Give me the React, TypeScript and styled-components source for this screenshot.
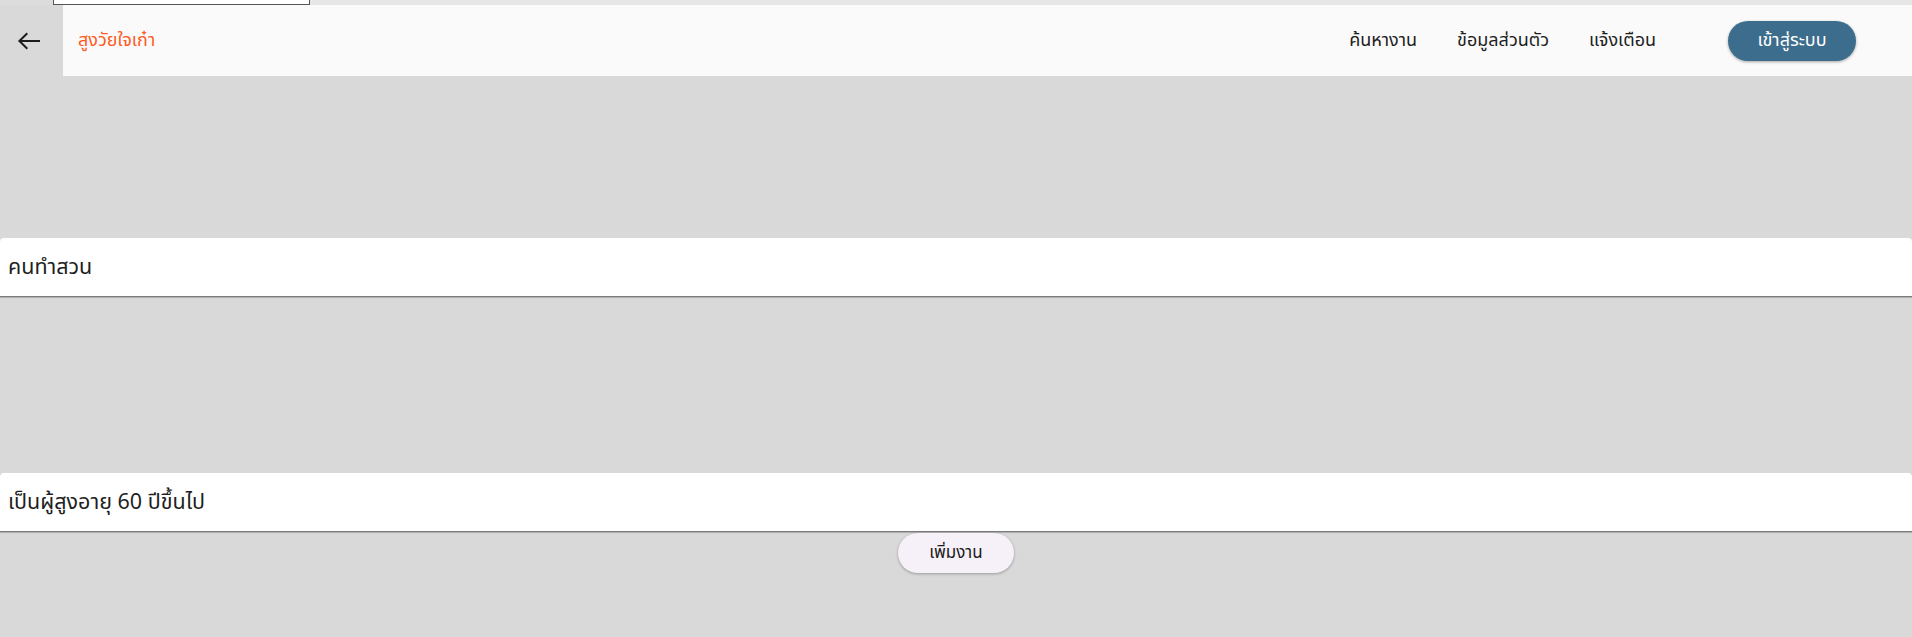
import React from "react";
import styled, { createGlobalStyle } from "styled-components";

const Global = createGlobalStyle`
  html, body { margin: 0; padding: 0; background: #d9d9d9; }
  body { font-family: "Noto Sans", "Noto Sans Thai", "Noto Sans Thai UI", sans-serif; }
  * { box-sizing: border-box; }
`;

const Page = styled.div`
  display: flex;
  flex-direction: column;
  min-height: 637px;
  background: #d9d9d9;
`;

const TopStrip = styled.div`
  height: 5px;
  background: #e6e6e6;
  display: flex;
`;

const StripSpacer = styled.div`
  width: 53px;
  background: #dcdcdc;
`;

const StripBox = styled.div`
  width: 257px;
  height: 5px;
  background: #ffffff;
  border-left: 1px solid #555;
  border-right: 1px solid #555;
  border-bottom: 1px solid #555;
`;

const Header = styled.header`
  height: 71px;
  display: flex;
  align-items: stretch;
`;

const BackArea = styled.div`
  width: 63px;
  background: #d9d9d9;
  display: flex;
  align-items: center;
  justify-content: center;
`;

const BackButton = styled.button`
  border: none;
  background: transparent;
  padding: 0;
  margin-left: -6px;
  width: 30px;
  height: 30px;
  display: flex;
  align-items: center;
  justify-content: center;
  cursor: pointer;
`;

const Bar = styled.div`
  flex: 1;
  background: #fafafa;
  display: flex;
  align-items: center;
  padding-left: 15px;
  padding-right: 56px;
`;

const Title = styled.div`
  color: #ff5a1f;
  font-size: 18px;
  flex: 1;
`;

const Nav = styled.nav`
  display: flex;
  align-items: center;
`;

const NavLink = styled.a`
  color: #1e1e1e;
  font-size: 18px;
  margin-left: 40px;
  text-decoration: none;
  cursor: pointer;
`;

const LoginButton = styled.button`
  margin-left: 72px;
  height: 40px;
  width: 128px;
  border: none;
  border-radius: 20px;
  background: #3d6d8d;
  color: #ffffff;
  font-family: inherit;
  font-size: 18px;
  box-shadow: 0 1px 3px rgba(0, 0, 0, 0.35);
  cursor: pointer;
`;

const Field = styled.div<{ $top: number }>`
  margin-top: ${(p) => p.$top}px;
  height: 59px;
  background: #ffffff;
  border-radius: 4px 4px 0 0;
  border-bottom: 1px solid #7a7a7a;
  box-shadow: 0 1px 1px rgba(0, 0, 0, 0.2);
  display: flex;
  align-items: center;
  padding-left: 8px;
  font-size: 21.5px;
  color: #1f1f1f;
`;

const Center = styled.div`
  display: flex;
  justify-content: center;
  padding-top: 1px;
`;

const AddButton = styled.button`
  height: 40px;
  width: 116px;
  border: none;
  border-radius: 20px;
  background: #f6f1f8;
  color: #1d1b20;
  font-family: inherit;
  font-size: 17px;
  box-shadow: 0 1px 3px rgba(0, 0, 0, 0.3);
  cursor: pointer;
`;

const ArrowBack = () => (
  <svg width="24" height="20" viewBox="0 0 24 20" fill="none">
    <path d="M23 10H2.5" stroke="#1c1c1c" strokeWidth="2" />
    <path d="M10.3 2.2L2.4 10l7.9 7.8" stroke="#1c1c1c" strokeWidth="2" />
  </svg>
);

export default function App() {
  return (
    <>
      <Global />
      <Page>
        <TopStrip>
          <StripSpacer />
          <StripBox />
        </TopStrip>
        <Header>
          <BackArea>
            <BackButton aria-label="back">
              <ArrowBack />
            </BackButton>
          </BackArea>
          <Bar>
            <Title>สูงวัยใจเก๋า</Title>
            <Nav>
              <NavLink>ค้นหางาน</NavLink>
              <NavLink>ข้อมูลส่วนตัว</NavLink>
              <NavLink>แจ้งเตือน</NavLink>
              <LoginButton>เข้าสู่ระบบ</LoginButton>
            </Nav>
          </Bar>
        </Header>
        <Field $top={162}>คนทำสวน</Field>
        <Field $top={176}>เป็นผู้สูงอายุ 60 ปีขึ้นไป</Field>
        <Center>
          <AddButton>เพิ่มงาน</AddButton>
        </Center>
      </Page>
    </>
  );
}
